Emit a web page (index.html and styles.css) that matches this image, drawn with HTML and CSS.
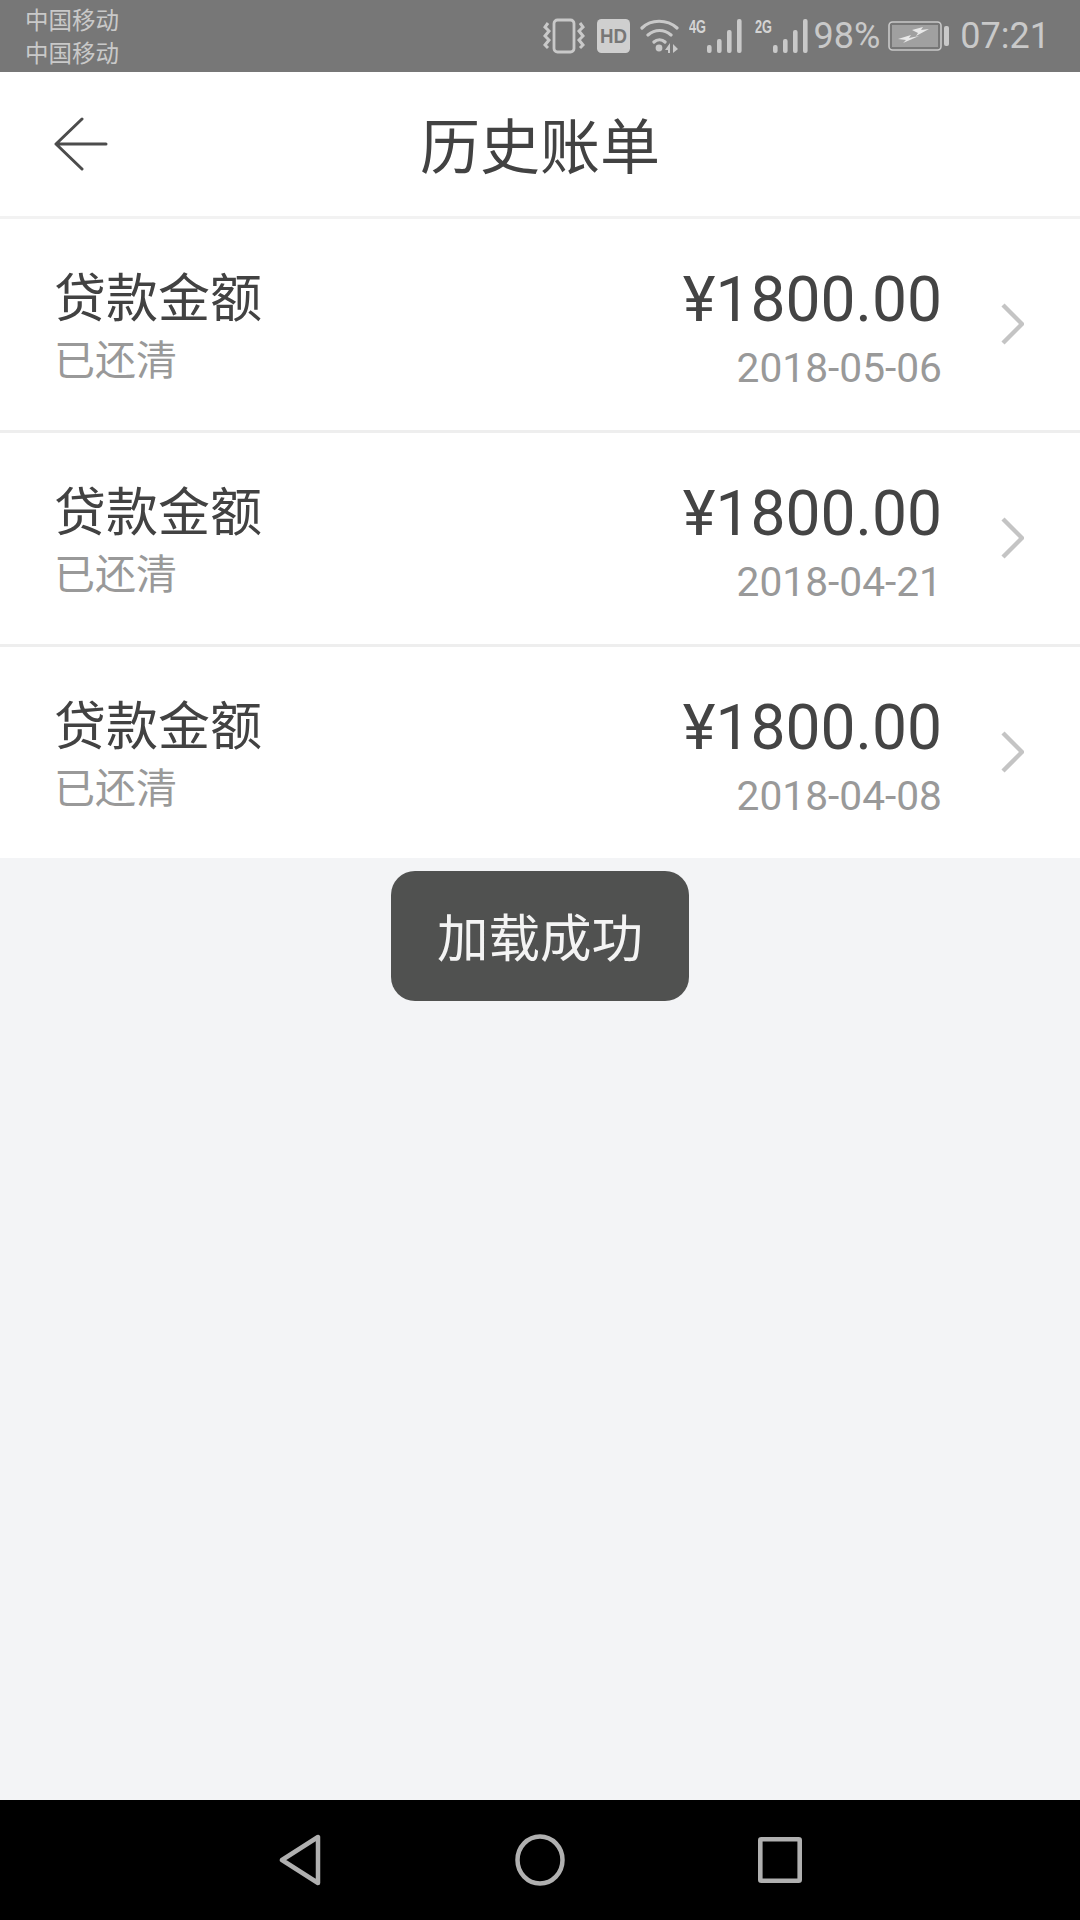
FILE: index.html
```html
<!DOCTYPE html>
<html lang="zh">
<head>
<meta charset="utf-8">
<title>历史账单</title>
<link rel="stylesheet" href="styles.css">
</head>
<body>
<div class="page">
  <div class="statusbar">
    <div class="carriers"><span>中国移动</span><span>中国移动</span></div>
    <div class="status-icons">
      <svg class="ic-vib" width="42" height="36" viewBox="0 0 42 36" fill="none" stroke="#c9c9c9">
        <rect x="11" y="2" width="20" height="32" rx="3.5" stroke-width="2.8"/>
        <path d="M5 5L2 9l4 4-4 5 4 4-4 5 3 3M37 5l3 4-4 4 4 5-4 4 4 5-3 3" stroke-width="3"/>
      </svg>
      <svg class="ic-hd" width="33" height="34" viewBox="0 0 33 34">
        <rect width="33" height="34" rx="4.5" fill="#cfcfcf"/>
        <text x="3" y="24" textLength="27" lengthAdjust="spacingAndGlyphs" class="hd-text">HD</text>
      </svg>
      <svg class="ic-wifi" width="39" height="36" viewBox="0 0 39 36" fill="none" stroke="#c9c9c9" stroke-width="3.2" stroke-linecap="round">
        <path d="M2 10C11 1 27 1 37 10M8 17c7-6 16-6 23 0M14 24c3-3 8-3 11 0"/>
        <circle cx="19" cy="30" r="3.4" fill="#c9c9c9" stroke="none"/>
        <path d="M25 32l5-7v10h-2v-3zM33 26l5 5-5 4z" fill="#c9c9c9" stroke="none"/>
      </svg>
      <svg class="ic-signal first" width="53" height="36" viewBox="0 0 53 36">
        <text x="0" y="15" textLength="17" lengthAdjust="spacingAndGlyphs" class="net-text">4G</text>
        <rect x="18" y="27" width="4.6" height="8" rx="2" fill="#c9c9c9"/>
        <rect x="28" y="21" width="4.6" height="14" rx="2" fill="#c9c9c9"/>
        <rect x="38" y="12" width="4.6" height="23" rx="2" fill="#c9c9c9"/>
        <rect x="48" y="1" width="4.6" height="34" rx="2" fill="#c9c9c9"/>
      </svg>
      <svg class="ic-signal" width="53" height="36" viewBox="0 0 53 36">
        <text x="0" y="15" textLength="17" lengthAdjust="spacingAndGlyphs" class="net-text">2G</text>
        <rect x="18" y="27" width="4.6" height="8" rx="2" fill="#c9c9c9"/>
        <rect x="28" y="21" width="4.6" height="14" rx="2" fill="#c9c9c9"/>
        <rect x="38" y="12" width="4.6" height="23" rx="2" fill="#c9c9c9"/>
        <rect x="48" y="1" width="4.6" height="34" rx="2" fill="#c9c9c9"/>
      </svg>
      <span class="pct">98%</span>
      <svg class="ic-batt" width="61" height="30" viewBox="0 0 61 30" fill="none">
        <rect x="1" y="1" width="52" height="28" rx="3.5" stroke="#c9c9c9" stroke-width="1.6"/>
        <rect x="4" y="4" width="46" height="22" fill="#a0a0a0"/>
        <path d="M10 18l13-4-2 3 10-2-16 7 3-3zM24 9l11-3-2 3 8-1-13 7 2-3z" fill="#e8e8e8"/>
        <rect x="56" y="5" width="5" height="20" rx="2" fill="#c9c9c9"/>
      </svg>
      <span class="clock">07:21</span>
    </div>
  </div>

  <header class="topbar">
    <svg class="back" width="54" height="54" viewBox="0 0 54 54" fill="none" stroke="#4c4c4c" stroke-width="3" stroke-linecap="round" stroke-linejoin="round">
      <path d="M28 2L2 27l26 25M2 27h50"/>
    </svg>
    <h1 class="title">历史账单</h1>
  </header>

  <main class="content">
    <div class="row">
      <div class="left"><div class="label">贷款金额</div><div class="state">已还清</div></div>
      <div class="right"><div class="amount">¥1800.00</div><div class="date">2018-05-06</div></div>
      <svg class="chev" width="24" height="42" viewBox="0 0 24 42" fill="none" stroke="#c4c4c4" stroke-width="4.4"><path d="M3 2l19 19L3 40"/></svg>
    </div>
    <div class="row">
      <div class="left"><div class="label">贷款金额</div><div class="state">已还清</div></div>
      <div class="right"><div class="amount">¥1800.00</div><div class="date">2018-04-21</div></div>
      <svg class="chev" width="24" height="42" viewBox="0 0 24 42" fill="none" stroke="#c4c4c4" stroke-width="4.4"><path d="M3 2l19 19L3 40"/></svg>
    </div>
    <div class="row">
      <div class="left"><div class="label">贷款金额</div><div class="state">已还清</div></div>
      <div class="right"><div class="amount">¥1800.00</div><div class="date">2018-04-08</div></div>
      <svg class="chev" width="24" height="42" viewBox="0 0 24 42" fill="none" stroke="#c4c4c4" stroke-width="4.4"><path d="M3 2l19 19L3 40"/></svg>
    </div>
    <div class="toast">加载成功</div>
  </main>

  <nav class="navbar">
    <svg width="42" height="52" viewBox="0 0 42 52" fill="none" stroke="#b0b0b0" stroke-width="4.5" stroke-linejoin="round"><path d="M39 3v46L3 26z"/></svg>
    <svg width="50" height="52" viewBox="0 0 50 52" fill="none" stroke="#b0b0b0" stroke-width="4.5"><ellipse cx="25" cy="26" rx="22.5" ry="23.5"/></svg>
    <svg width="44" height="46" viewBox="0 0 44 46" fill="none" stroke="#b0b0b0" stroke-width="4.6" stroke-linejoin="round"><rect x="2.3" y="2.3" width="39.4" height="41.4" rx="1"/></svg>
  </nav>
</div>
</body>
</html>
```

FILE: styles.css
```css
* { box-sizing: border-box; }
html, body { margin: 0; padding: 0; }
body { font-family: Roboto, "Noto Sans CJK SC", sans-serif; }
.page { width: 1080px; height: 1920px; display: flex; flex-direction: column; background: #f3f4f6; }

.statusbar { height: 72px; background: #777777; display: flex; justify-content: space-between; align-items: center; padding: 0 30px 0 25px; color: #c9c9c9; flex: none; }
.carriers { display: flex; flex-direction: column; font-size: 23.5px; line-height: 33px; font-family: "Noto Sans CJK SC", sans-serif; }
.status-icons { display: flex; align-items: center; }
.ic-vib { margin-right: 12px; }
.ic-hd { margin-right: 10px; }
.ic-wifi { margin-right: 10px; }
.ic-signal { margin-right: 6px; }
.ic-signal.first { margin-right: 13px; }
.hd-text { font: 700 21px "Liberation Sans", sans-serif; fill: #777777; }
.net-text { font: 700 18px "Liberation Sans", sans-serif; fill: #d4d4d4; }
.pct { font-size: 36px; line-height: 40px; margin-right: 8px; }
.ic-batt { margin-right: 11px; }
.clock { font-size: 36px; line-height: 40px; }

.topbar { height: 147px; flex: none; background: #fff; border-bottom: 3px solid #f2f2f2; display: grid; grid-template-columns: 1fr auto 1fr; align-items: center; padding-left: 54px; padding-right: 54px; }
.title { margin: 0 0 3px; font-weight: 400; font-size: 60px; line-height: 70px; color: #424242; font-family: "Noto Sans CJK SC", sans-serif; }

.content { flex: 1; position: relative; }
.row { height: 214px; background: #fff; border-bottom: 3px solid #eeeeee; display: flex; align-items: center; padding: 0 56px 0 54px; }
.row:nth-child(3) { height: 211px; border-bottom: 0; }
.left { flex: 1; padding-bottom: 2px; font-family: "Noto Sans CJK SC", sans-serif; }
.label { font-size: 52px; line-height: 66px; color: #424242; }
.state { font-size: 41px; line-height: 58px; color: #999999; }
.right { text-align: right; margin-right: 58px; padding-top: 6px; }
.amount { font-size: 62.3px; line-height: 80px; color: #444444; }
.date { font-size: 40.7px; line-height: 56px; color: #999999; }
.chev { margin-bottom: 2px; }
.toast { position: absolute; left: 391px; top: 652px; width: 298px; height: 130px; padding-bottom: 4px; border-radius: 24px; background: #505150; color: #f4f4f4; font-size: 51.5px; display: flex; align-items: center; justify-content: center; font-family: "Noto Sans CJK SC", sans-serif; }

.navbar { height: 120px; flex: none; background: #000; display: flex; align-items: center; justify-content: space-between; padding: 0 278px 0 279px; }
```
